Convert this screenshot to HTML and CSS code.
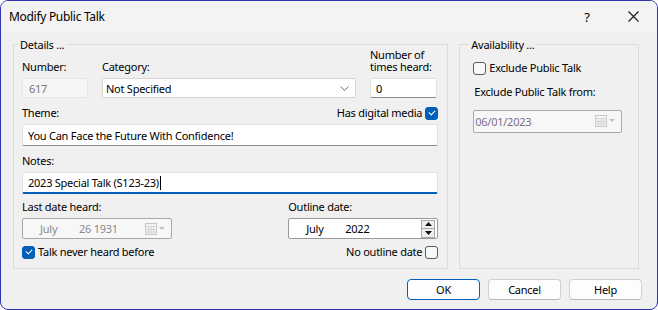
FILE: index.html
```html
<!DOCTYPE html>
<html lang="en">
<head>
    <meta charset="UTF-8">
    <title>Modify Public Talk</title>
    <link rel="stylesheet" href="styles.css">
</head>
<body>
    <div class="window">
        <div class="titlebar">
            <span class="title">Modify Public Talk</span>
            <span class="title-btn help">?</span>
            <span class="title-btn close">
                <svg width="11" height="11" viewBox="0 0 11 11"><path d="M0.5 0.5 L10.5 10.5 M10.5 0.5 L0.5 10.5" stroke="#1a1a1a" stroke-width="1.1" fill="none"/></svg>
            </span>
        </div>

        <div class="content">
            <div class="groups">
                <fieldset class="group details">
                    <legend>Details ...</legend>

                    <div class="row-top">
                        <div class="field">
                            <label>Number:</label>
                            <div class="input disabled">617</div>
                        </div>
                        <div class="field">
                            <label>Category:</label>
                            <div class="input combo">
                                <span>Not Specified</span>
                                <svg width="9" height="5" viewBox="0 0 9 5"><path d="M0.5 0.5 L4.5 4.5 L8.5 0.5" stroke="#707070" fill="none"/></svg>
                            </div>
                        </div>
                        <div class="field">
                            <label>Number of<br>times heard:</label>
                            <div class="input">0</div>
                        </div>
                    </div>

                    <div class="label-row">
                        <label>Theme:</label>
                        <span class="check right">Has digital media <span class="box checked"></span></span>
                    </div>
                    <div class="input text">You Can Face the Future With Confidence!</div>

                    <div class="label-row">
                        <label>Notes:</label>
                    </div>
                    <div class="input text focused">2023 Special Talk (S123-23)<span class="caret"></span></div>

                    <div class="date-row">
                        <div class="field">
                            <label>Last date heard:</label>
                            <div class="picker disabled">
                                <span class="month">July</span>
                                <span class="day">26 1931</span>
                                <span class="cal">
                                    <svg width="22" height="12" viewBox="0 0 22 12">
                                        <rect x="0.5" y="0.5" width="11" height="11" fill="#f4f4f4" stroke="#c8c8c8"/>
                                        <path d="M0.5 3.5 H11.5 M0.5 6.5 H11.5 M0.5 9 H11.5 M3.5 3.5 V11.5 M6 3.5 V11.5 M8.5 3.5 V11.5" stroke="#d6d6d6" fill="none"/>
                                        <path d="M14 4 L20 4 L17 7 Z" fill="#c0c0c0"/>
                                    </svg>
                                </span>
                            </div>
                        </div>
                        <div class="field">
                            <label>Outline date:</label>
                            <div class="picker">
                                <span class="month">July</span>
                                <span class="year">2022</span>
                                <span class="spin">
                                    <span class="spin-btn"><svg width="7" height="4" viewBox="0 0 7 4"><path d="M0 4 L3.5 0 L7 4 Z" fill="#111"/></svg></span>
                                    <span class="spin-btn"><svg width="7" height="4" viewBox="0 0 7 4"><path d="M0 0 L3.5 4 L7 0 Z" fill="#111"/></svg></span>
                                </span>
                            </div>
                        </div>
                    </div>

                    <div class="check-row">
                        <span class="check"><span class="box checked"></span> Talk never heard before</span>
                        <span class="check right">No outline date <span class="box"></span></span>
                    </div>
                </fieldset>

                <fieldset class="group availability">
                    <legend>Availability ...</legend>
                    <span class="check exclude"><span class="box"></span> Exclude Public Talk</span>
                    <label class="from-label">Exclude Public Talk from:</label>
                    <div class="picker wide disabled">
                        <span class="date-text">06/01/2023</span>
                        <span class="cal">
                            <svg width="22" height="12" viewBox="0 0 22 12">
                                <rect x="0.5" y="0.5" width="11" height="11" fill="#f4f4f4" stroke="#c8c8c8"/>
                                <path d="M0.5 3.5 H11.5 M0.5 6.5 H11.5 M0.5 9 H11.5 M3.5 3.5 V11.5 M6 3.5 V11.5 M8.5 3.5 V11.5" stroke="#d6d6d6" fill="none"/>
                                <path d="M14 4 L20 4 L17 7 Z" fill="#c0c0c0"/>
                            </svg>
                        </span>
                    </div>
                </fieldset>
            </div>

            <div class="buttons">
                <button class="btn default">OK</button>
                <button class="btn">Cancel</button>
                <button class="btn">Help</button>
            </div>
        </div>
    </div>
</body>
</html>
```

FILE: styles.css
```css
html {
    background: white;
}

body {
    margin: 0;
    font-family: "Segoe UI", "Noto Sans", sans-serif;
    font-size: 11px;
    letter-spacing: -0.25px;
    color: #000;
}

.window {
    width: 658px;
    height: 310px;
    box-sizing: border-box;
    border: 1px solid #3434b0;
    border-radius: 8px;
    background: #f0f0f0;
    overflow: hidden;
}

.titlebar {
    display: flex;
    align-items: center;
    height: 31px;
    background: #f3f3f3;
    padding-left: 8px;
}

.title {
    font-size: 12px;
    letter-spacing: -0.3px;
    flex: 1;
}

.title-btn {
    width: 46px;
    text-align: center;
}

.help {
    font-size: 13px;
}

.close {
    display: flex;
    justify-content: center;
    margin-right: 1px;
}

.content {
    padding: 6px 18px 0 12px;
}

.groups {
    display: flex;
    gap: 11px;
    height: 231px;
}

.group {
    margin: 0;
    border: 1px solid #dcdcdc;
    padding: 0 9px 8px 8px;
    box-sizing: border-box;
}

.group legend {
    padding: 0 2px;
    margin-left: -4px;
    line-height: 13px;
}

.details {
    width: 436px;
}

.availability {
    width: 180px;
    padding-left: 13px;
}

label {
    display: block;
    line-height: 12px;
}

.row-top {
    display: grid;
    grid-template-columns: 66px 254px 67px;
    column-gap: 14px;
    align-items: end;
    margin-top: -2px;
}

.field {
    display: flex;
    flex-direction: column;
    gap: 5px;
}

.input {
    height: 20px;
    box-sizing: border-box;
    background: white;
    border: 1px solid #e2e2e2;
    border-bottom-color: #8a8a8a;
    border-radius: 2px;
    padding: 0 5px;
    display: flex;
    align-items: center;
}

.input.disabled {
    background: #f5f5f5;
    border-color: #e6e6e6;
    color: #767676;
    padding-left: 6px;
}

.input.combo {
    border: 1px solid #d5d5d5;
    justify-content: space-between;
    padding-right: 6px;
    padding-left: 3px;
}

.label-row {
    display: flex;
    justify-content: space-between;
    align-items: center;
    height: 14px;
    margin-top: 8px;
    margin-bottom: 4px;
}

.input.text {
    height: 22px;
    padding-left: 5px;
}

.input.focused {
    border-bottom: 2px solid #005fb8;
}

.caret {
    display: inline-block;
    width: 1px;
    height: 14px;
    background: #000;
    margin-left: 1px;
}

.date-row {
    display: flex;
    justify-content: space-between;
    margin-top: 7px;
}

.date-row .field {
    width: 150px;
}

.picker {
    height: 21px;
    box-sizing: border-box;
    background: white;
    border: 1px solid #9a9a9a;
    border-radius: 2px;
    display: flex;
    align-items: center;
}

.picker.disabled {
    background: #f7f7f7;
    border-color: #a8a8a8;
    color: #8a8a8a;
}

.month {
    margin-left: 17px;
    width: 39px;
}

.picker .cal {
    margin-left: auto;
    margin-right: 4px;
    display: flex;
}

.spin {
    margin-left: auto;
    margin-right: 2px;
    display: flex;
    flex-direction: column;
}

.spin-btn {
    width: 14px;
    height: 9px;
    box-sizing: border-box;
    border: 1px solid #a8a8a8;
    background: #efefef;
    display: flex;
    align-items: center;
    justify-content: center;
}

.spin-btn + .spin-btn {
    border-top: none;
}

.check-row {
    display: flex;
    justify-content: space-between;
    margin-top: 6px;
}

.check {
    display: inline-flex;
    align-items: center;
    gap: 3px;
    line-height: 14px;
}

.box {
    width: 13px;
    height: 13px;
    box-sizing: border-box;
    border: 1px solid #5a5a5a;
    border-radius: 3px;
    background: #f8f8f8;
    display: inline-block;
    position: relative;
}

.box.checked {
    background: #005fb8;
    border-color: #005fb8;
}

.box.checked::after {
    content: "";
    position: absolute;
    left: 3px;
    top: 2px;
    width: 5px;
    height: 3px;
    border-left: 1px solid white;
    border-bottom: 1px solid white;
    transform: rotate(-45deg);
}

.exclude {
    margin-top: 10px;
}

.from-label {
    margin-top: 8px;
    margin-left: 1px;
}

.picker.wide {
    width: 149px;
    height: 23px;
    margin-top: 12px;
}

.date-text {
    color: #7b6f88;
    margin-left: 1px;
}

.buttons {
    display: flex;
    justify-content: flex-end;
    gap: 8px;
    margin-top: 10px;
    margin-right: -3px;
}

.btn {
    width: 73px;
    height: 21px;
    font-family: inherit;
    font-size: 11px;
    letter-spacing: inherit;
    background: #fdfdfd;
    border: 1px solid #d0d0d0;
    border-bottom-color: #b8b8b8;
    border-radius: 4px;
    padding: 0;
    color: #000;
}

.btn.default {
    border: 1px solid #005fb8;
}
```
